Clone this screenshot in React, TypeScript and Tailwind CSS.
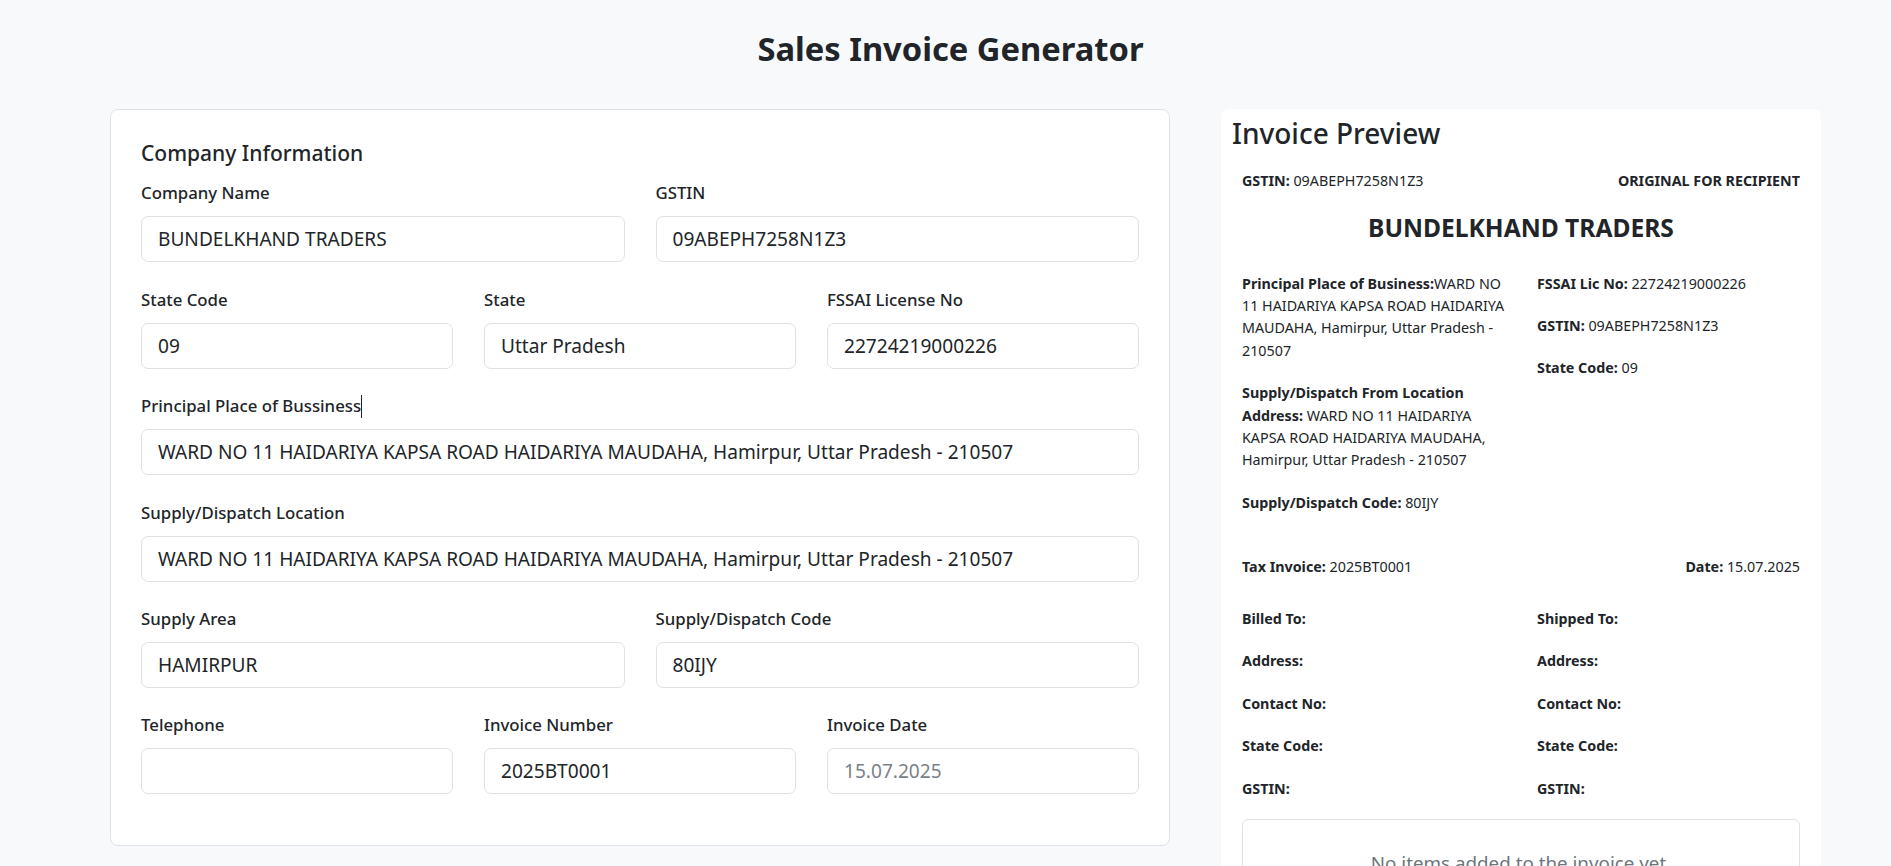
import React from "react";

const Field = ({
	label,
	value,
	muted,
	caret,
}: {
	label: string;
	value: string;
	muted?: boolean;
	caret?: boolean;
}) => (
	<div className="mb-[25.4px]">
		<label className="mb-[11px] flex h-[24px] items-center text-[16.8px] font-medium leading-[24px]">
			{label}
			{caret && <span className="inline-block h-[23px] w-px bg-[#212529]" />}
		</label>
		<input
			readOnly
			value={value}
			className={`block h-[46px] w-full rounded-[7px] border border-[#dee2e6] bg-white px-[16px] text-[19.1px] outline-none ${
				muted ? "text-[#7b8188]" : "text-[#212529]"
			}`}
		/>
	</div>
);

const Line = ({ label, value }: { label: string; value?: string }) => (
	<p className="mb-[20px] leading-[22.4px]">
		<span className="font-bold">{label}</span>
		{value ? ` ${value}` : ""}
	</p>
);

export default function App() {
	const address =
		"WARD NO 11 HAIDARIYA KAPSA ROAD HAIDARIYA MAUDAHA, Hamirpur, Uttar Pradesh - 210507";

	return (
		<div className="min-h-screen overflow-hidden bg-[#f8f9fa] font-['Noto_Sans','Open_Sans',sans-serif] text-[#212529]">
			<h1 className="pt-[29px] pl-[10px] text-center text-[32.7px] font-bold leading-[1.2]">
				Sales Invoice Generator
			</h1>

			<div className="mt-[41px] flex items-start gap-[51px] pl-[110px]">
				{/* Form card */}
				<div className="w-[1060px] shrink-0 rounded-lg border border-[#dee2e6] bg-white px-[30px] pt-[29.8px] pb-[25.5px]">
					<h5 className="mb-[15px] text-[21px] font-medium leading-[26.4px]">
						Company Information
					</h5>

					<div className="grid grid-cols-2 gap-x-[31px]">
						<Field label="Company Name" value="BUNDELKHAND TRADERS" />
						<Field label="GSTIN" value="09ABEPH7258N1Z3" />
					</div>

					<div className="grid grid-cols-3 gap-x-[31px]">
						<Field label="State Code" value="09" />
						<Field label="State" value="Uttar Pradesh" />
						<Field label="FSSAI License No" value="22724219000226" />
					</div>

					<Field label="Principal Place of Bussiness" value={address} caret />
					<Field label="Supply/Dispatch Location" value={address} />

					<div className="grid grid-cols-2 gap-x-[31px]">
						<Field label="Supply Area" value="HAMIRPUR" />
						<Field label="Supply/Dispatch Code" value="80IJY" />
					</div>

					<div className="grid grid-cols-3 gap-x-[31px]">
						<Field label="Telephone" value="" />
						<Field label="Invoice Number" value="2025BT0001" />
						<Field label="Invoice Date" value="15.07.2025" muted />
					</div>
				</div>

				{/* Preview */}
				<div className="w-[600px] shrink-0 rounded-lg bg-white px-[11px] pt-[7.5px] pb-[20px]">
					<h3 className="text-[28px] font-medium leading-[1.2]">Invoice Preview</h3>

					<div className="px-[10px] pt-[19.6px] text-[14.3px]">
						<div className="flex justify-between leading-[22.4px]">
							<span>
								<span className="font-bold">GSTIN:</span> 09ABEPH7258N1Z3
							</span>
							<span className="font-bold">ORIGINAL FOR RECIPIENT</span>
						</div>

						<h4 className="mt-[22px] text-center text-[24.6px] font-bold leading-[28.8px]">
							BUNDELKHAND TRADERS
						</h4>

						<div className="mt-[29.4px] grid grid-cols-[265px_1fr] gap-x-[30px]">
							<div>
								<p className="mb-[20px] leading-[22.4px]">
									<span className="font-bold">Principal Place of Business:</span>WARD NO
									<br />
									11 HAIDARIYA KAPSA ROAD HAIDARIYA
									<br />
									MAUDAHA, Hamirpur, Uttar Pradesh -
									<br />
									210507
								</p>
								<p className="mb-[20px] leading-[22.4px]">
									<span className="font-bold">Supply/Dispatch From Location</span>
									<br />
									<span className="font-bold">Address:</span> WARD NO 11 HAIDARIYA
									<br />
									KAPSA ROAD HAIDARIYA MAUDAHA,
									<br />
									Hamirpur, Uttar Pradesh - 210507
								</p>
								<Line label="Supply/Dispatch Code:" value="80IJY" />
							</div>
							<div>
								<Line label="FSSAI Lic No:" value="22724219000226" />
								<Line label="GSTIN:" value="09ABEPH7258N1Z3" />
								<Line label="State Code:" value="09" />
							</div>
						</div>

						<div className="mt-[21.8px] flex justify-between leading-[22.4px]">
							<span>
								<span className="font-bold">Tax Invoice:</span> 2025BT0001
							</span>
							<span>
								<span className="font-bold">Date:</span> 15.07.2025
							</span>
						</div>

						<div className="mt-[29.7px] grid grid-cols-[265px_1fr] gap-x-[30px]">
							<div>
								<Line label="Billed To:" />
								<Line label="Address:" />
								<Line label="Contact No:" />
								<Line label="State Code:" />
								<Line label="GSTIN:" />
							</div>
							<div>
								<Line label="Shipped To:" />
								<Line label="Address:" />
								<Line label="Contact No:" />
								<Line label="State Code:" />
								<Line label="GSTIN:" />
							</div>
						</div>

						<div className="-mt-[1px] rounded-[6px] border border-[#dee2e6] px-4 pt-[29px] pb-[29px] text-center text-[18.8px] leading-[28.2px] text-[#6c757d]">
							No items added to the invoice yet.
						</div>
					</div>
				</div>
			</div>
		</div>
	);
}
